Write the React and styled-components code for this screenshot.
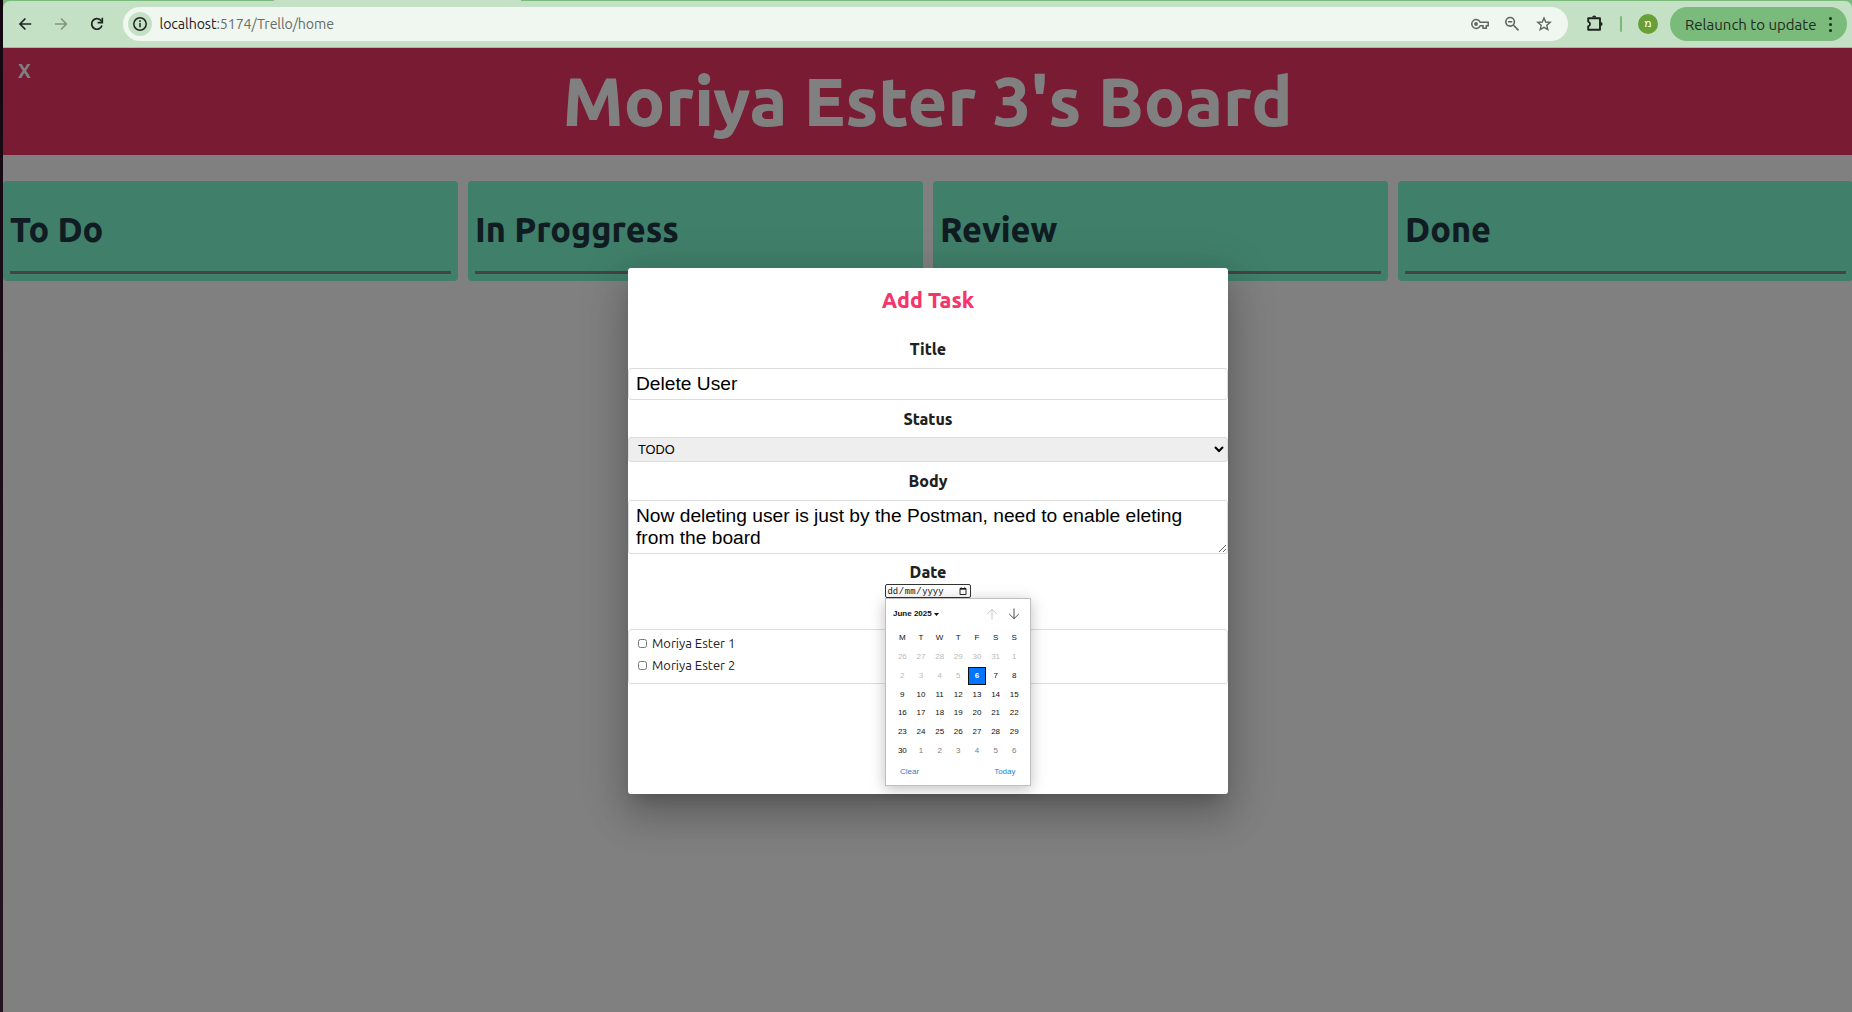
import React from "react";
import styled, { createGlobalStyle } from "styled-components";

const UI = `"Ubuntu", "Noto Sans", sans-serif`;
const ARIAL = `"Liberation Sans", Arial, sans-serif`;

const GlobalStyle = createGlobalStyle`
  *, *::before, *::after { box-sizing: border-box; }
  body { margin: 0; overflow: hidden; background: #808080; font-family: ${UI}; }
`;

/* ---------- window ---------- */

const Screen = styled.div`
  display: flex;
  width: 100vw;
  height: 100vh;
  overflow: hidden;
`;

const DesktopEdge = styled.div`
  flex: 0 0 3px;
  background: linear-gradient(#140810, #251422);
`;

const Window = styled.div`
  flex: 1;
  min-width: 0;
  display: flex;
  flex-direction: column;
`;

/* ---------- browser toolbar ---------- */

const Chrome = styled.div`
  flex: 0 0 48px;
  padding-top: 1px;
  background: linear-gradient(90deg, #7aba7b 271px, #c5e1c5 271px, #c5e1c5 518px, #7aba7b 518px);
`;

const Toolbar = styled.div`
  display: flex;
  align-items: center;
  height: 47px;
  padding-left: 13px;
  background: #c5e1c5;
  border-bottom: 1px solid #9dbf9e;
  border-radius: 7px 7px 0 0;
`;

const NavIcons = styled.div`
  display: flex;
  gap: 18px;
  margin-right: 17px;
  color: #1f2420;
`;

const Icon = styled.svg`
  display: block;
  flex: none;
  width: ${(p) => p.$size || 18}px;
  height: ${(p) => p.$size || 18}px;
  color: ${(p) => p.$color || "inherit"};
  fill: none;
  stroke: currentColor;
  stroke-width: 1.7;
`;

const Omnibox = styled.div`
  display: flex;
  align-items: center;
  width: 1445px;
  height: 34px;
  padding: 0 15px 0 5px;
  border-radius: 17px;
  background: #f0f7f0;
`;

const SiteInfo = styled.div`
  display: grid;
  place-items: center;
  width: 24px;
  height: 24px;
  margin-right: 7.5px;
  border-radius: 50%;
  background: #c5e1c5;
  color: #1f2420;
`;

const Url = styled.div`
  flex: 1;
  font-size: 14.2px;
  font-weight: 450;
  line-height: 20px;
  letter-spacing: -0.09px;
  color: #666c67;
  white-space: nowrap;
`;

const Host = styled.span`
  color: #1d211e;
`;

const OmniActions = styled.div`
  display: flex;
  gap: 14px;
  color: #5f6660;
`;

const Extensions = styled.div`
  margin-left: 17px;
  color: #1f2420;
`;

const Divider = styled.div`
  width: 2px;
  height: 16px;
  margin: 0 16px 0 15px;
  border-radius: 1px;
  background: #7aba7b;
`;

const Avatar = styled.div`
  width: 20px;
  height: 20px;
  border-radius: 50%;
  background: #689f38;
  color: #fff;
  font: 11px/20px "DejaVu Sans", sans-serif;
  text-align: center;
`;

const Relaunch = styled.div`
  display: flex;
  align-items: center;
  justify-content: space-between;
  width: 177px;
  height: 34px;
  margin-left: 12px;
  padding: 0 14px 0 15px;
  border-radius: 17px;
  background: #7aba7b;
  color: #1f2a20;
  font-size: 15px;
  font-weight: 450;
  white-space: nowrap;
`;

const MenuDots = styled.div`
  display: flex;
  flex-direction: column;
  align-items: center;
  gap: 3px;
  width: 6px;
`;

const Dot = styled.i`
  width: 3px;
  height: 3px;
  border-radius: 50%;
  background: #1f2420;
`;

/* ---------- board ---------- */

const Page = styled.main`
  position: relative;
  flex: 1;
  background: #808080;
`;

const Header = styled.header`
  display: grid;
  grid-template-columns: 60px 1fr 60px;
  height: 107px;
  background: #791b33;
  color: #808080;
`;

const CloseBoard = styled.div`
  padding: 12px 0 0 15px;
  font-size: 19.5px;
  font-weight: 700;
  line-height: 22px;
`;

const BoardTitle = styled.h1`
  margin: 0;
  font-size: 68.4px;
  font-weight: 800;
  line-height: 106px;
  text-align: center;
  white-space: nowrap;
`;

const Columns = styled.section`
  display: grid;
  grid-template-columns: repeat(4, 455px);
  gap: 10px;
  padding-top: 26px;
`;

const Column = styled.div`
  height: 100px;
  padding: 0 7px;
  border-radius: 4px;
  background: #407f6a;
`;

const ColumnTitle = styled.h2`
  margin: 0;
  padding-top: 7px;
  border-bottom: 3px solid #444;
  color: #101c22;
  font-size: 34.2px;
  font-weight: 800;
  line-height: 83px;
`;

/* ---------- dialog ---------- */

const Dialog = styled.div`
  position: absolute;
  top: 220px;
  left: 625px;
  display: flex;
  flex-direction: column;
  width: 600px;
  height: 526px;
  border-radius: 3px;
  background: #fff;
  color: #212121;
  box-shadow:
    0 11px 15px -7px rgba(0, 0, 0, 0.2),
    0 24px 38px 3px rgba(0, 0, 0, 0.14),
    0 9px 46px 8px rgba(0, 0, 0, 0.12);
`;

const DialogTitle = styled.h3`
  height: 63px;
  margin: 0;
  color: #f4366c;
  font-size: 21.4px;
  font-weight: 800;
  line-height: 65px;
  text-align: center;
`;

const Label = styled.label`
  display: block;
  height: ${(p) => p.$height || 37}px;
  font-size: 16px;
  font-weight: 800;
  line-height: ${(p) => p.$line || 37}px;
  text-align: center;
`;

const TextInput = styled.input`
  width: 100%;
  height: 32px;
  padding: 0 7px;
  border: 1px solid #ddd;
  border-radius: 3px;
  outline: none;
  background: #fff;
  color: #000;
  font: 19.2px ${ARIAL};
`;

const Select = styled.select`
  width: 100%;
  height: 25px;
  padding: 0 4px 0 5px;
  border: 1px solid #ddd;
  border-radius: 3px;
  background: #eee;
  color: #000;
  font: 12.8px ${ARIAL};
`;

const TextArea = styled.textarea`
  display: block;
  width: 100%;
  height: 54px;
  padding: 4px 7px;
  border: 1px solid #ddd;
  border-radius: 3px;
  outline: none;
  overflow: hidden;
  color: #000;
  font: 19.2px/22px ${ARIAL};
`;

const DateField = styled.div`
  position: relative;
  display: flex;
  align-items: center;
  width: 86px;
  height: 14px;
  margin: 0 0 31px 257px;
  padding: 1px 3px 0 1.5px;
  border: 1px solid #333;
  border-radius: 2px;
  color: #111;
  font: 8.9px/12px "Liberation Mono", monospace;
`;

const DatePart = styled.span`
  margin-right: 0.7px;
`;

const PickerIcon = styled(Icon)`
  margin: -1px 0 0 auto;
`;

const Members = styled.div`
  height: 55px;
  padding: 2px 9px;
  border: 1px solid #ddd;
  border-radius: 3px;
`;

const Member = styled.label`
  display: flex;
  align-items: center;
  height: 22px;
  font-size: 13px;
  font-weight: 440;
`;

const Checkbox = styled.input`
  width: 9px;
  height: 9px;
  margin: 0 5px 0 0;
`;

/* ---------- calendar popup ---------- */

const Calendar = styled.div`
  position: absolute;
  z-index: 2;
  top: 13px;
  left: -1px;
  width: 146px;
  height: 188px;
  border: 1px solid #bfbfbf;
  background: #fff;
  box-shadow: 0 3px 14px rgba(0, 0, 0, 0.25);
  color: #101010;
  font: 8px/10px ${ARIAL};
`;

const MonthBar = styled.div`
  display: flex;
  align-items: center;
  height: 29px;
  padding: 1px 10px 0 7px;
  font-weight: 700;
`;

const Caret = styled.svg`
  display: block;
  width: 5px;
  height: 3px;
  margin: 0 auto 0 2px;
  fill: #101010;
`;

const MonthArrow = styled(Icon)`
  margin-left: 10px;
  stroke-width: 0.95;
`;

const Days = styled.div`
  display: grid;
  grid-template-columns: repeat(7, 18.67px);
  grid-template-rows: 20px repeat(6, 18.67px);
  margin-left: 7px;
`;

const tones = { past: "#b9b9b9", next: "#7d7d7d", day: "#101010", today: "#fff" };

const Day = styled.span`
  display: grid;
  place-items: center;
  color: ${(p) => tones[p.$tone]};
  font-weight: ${(p) => (p.$tone === "today" ? 700 : 400)};
  background: ${(p) => (p.$tone === "today" ? "#0075ff" : "none")};
  border: ${(p) => (p.$tone === "today" ? "1px solid #101010" : "0")};
`;

const CalendarFooter = styled.div`
  display: flex;
  justify-content: space-between;
  padding: 7.5px 14.5px 0 14px;
  color: #1a85d6;
`;

/* ---------- data ---------- */

const columns = ["To Do", "In Proggress", "Review", "Done"];
const members = ["Moriya Ester 1", "Moriya Ester 2"];
const weekdays = ["M", "T", "W", "T", "F", "S", "S"];

/* June 2025 in six weeks, with the ends of May and the start of July */
const TODAY = 6;
const days = Array.from({ length: 42 }, (_, i) => {
  if (i < 6) return { n: 26 + i, tone: "past" };
  const n = i - 5;
  if (n > 30) return { n: n - 30, tone: "next" };
  if (n === TODAY) return { n, tone: "today" };
  return { n, tone: n < TODAY ? "past" : "day" };
});

/* ---------- views ---------- */

function BrowserBar() {
  return (
    <Chrome>
      <Toolbar>
        <NavIcons>
          <Icon viewBox="0 0 18 18"><path d="M15.2 9H4.4M9.4 3.5 4 9 9.4 14.5" /></Icon>
          <Icon viewBox="0 0 18 18" $color="#83957f"><path d="M3 9h11M9 3.5 14.4 9 9 14.5" /></Icon>
          <Icon viewBox="0 0 18 18">
            <path d="M14 10.6A5.3 5.3 0 1 1 13.2 5.7L14.3 7" />
            <path d="M14.3 2.8V7.6H9.6" />
          </Icon>
        </NavIcons>
        <Omnibox>
          <SiteInfo>
            <Icon viewBox="0 0 18 18">
              <circle cx="9" cy="9" r="6.2" strokeWidth="1.5" />
              <path d="M9 8v4.2M9 5.3v1.6" strokeWidth="1.5" />
            </Icon>
          </SiteInfo>
          <Url><Host>localhost</Host>:5174/Trello/home</Url>
          <OmniActions>
            <Icon viewBox="0 0 18 18">
              <path d="M9.2 7.3A4.4 4.4 0 1 0 9.2 10.7H12v2.6h3.3v-2.6H17.2V7.3Z" strokeWidth="1.5" />
              <circle cx="5" cy="9" r="1.9" fill="currentColor" stroke="none" />
            </Icon>
            <Icon viewBox="0 0 18 18">
              <circle cx="7.1" cy="6.8" r="4.3" strokeWidth="1.6" />
              <path d="M10.3 10l5.2 5.4M5 6.8h4.2" strokeWidth="1.6" />
            </Icon>
            <Icon viewBox="0 0 18 18">
              <path d="M9 3l1.7 4 4.5.4-3.4 2.9 1 4.3L9 12.3l-3.8 2.3 1-4.3L2.8 7.4 7.3 7Z" strokeWidth="1.4" />
            </Icon>
          </OmniActions>
        </Omnibox>
        <Extensions>
          <Icon viewBox="0 0 20 20" $size={20}>
            <path d="M3.2 4.2H15v11.6H3.2v-3.4a2.5 2.5 0 0 0 0-4.8Z" strokeWidth="1.9" strokeLinejoin="round" />
            <path d="M7.2 3.6a2 2 0 0 1 4 0ZM15.6 8a2 2 0 0 1 0 4Z" fill="currentColor" stroke="none" />
          </Icon>
        </Extensions>
        <Divider />
        <Avatar>מ</Avatar>
        <Relaunch>
          Relaunch to update
          <MenuDots><Dot /><Dot /><Dot /></MenuDots>
        </Relaunch>
      </Toolbar>
    </Chrome>
  );
}

function DatePicker() {
  return (
    <DateField>
      <DatePart>dd</DatePart><DatePart>/</DatePart>
      <DatePart>mm</DatePart><DatePart>/</DatePart>
      <DatePart>yyyy</DatePart>
      <PickerIcon viewBox="0 0 8 8" $size={8}>
        <path d="M1 1.5h6v6H1zM1 2.2h6M2.3.3v1.2M5.7.3v1.2" strokeWidth="0.9" />
      </PickerIcon>
      <Calendar>
        <MonthBar>
          June 2025
          <Caret viewBox="0 0 5 3"><path d="M0 0h5L2.5 3Z" /></Caret>
          <MonthArrow viewBox="0 0 12 12" $size={12} $color="#c4c4c4"><path d="M6 11.5V1.5M1.2 6 6 1.3 10.8 6" /></MonthArrow>
          <MonthArrow viewBox="0 0 12 12" $size={12} $color="#444"><path d="M6 .5v10M1.2 6 6 10.7 10.8 6" /></MonthArrow>
        </MonthBar>
        <Days>
          {weekdays.map((d, i) => <Day key={"w" + i} $tone="day">{d}</Day>)}
          {days.map((d, i) => <Day key={i} $tone={d.tone}>{d.n}</Day>)}
        </Days>
        <CalendarFooter><span>Clear</span><span>Today</span></CalendarFooter>
      </Calendar>
    </DateField>
  );
}

function AddTask() {
  return (
    <Dialog>
      <DialogTitle>Add Task</DialogTitle>
      <Label>Title</Label>
      <TextInput defaultValue="Delete User" />
      <Label $line={38}>Status</Label>
      <Select defaultValue="TODO"><option>TODO</option></Select>
      <Label $height={38} $line={38}>Body</Label>
      <TextArea
        spellCheck={false}
        defaultValue="Now deleting user is just by the Postman, need to enable eleting from the board"
      />
      <Label $height={30} $line={36}>Date</Label>
      <DatePicker />
      <Members>
        {members.map((m) => (
          <Member key={m}><Checkbox type="checkbox" />{m}</Member>
        ))}
      </Members>
    </Dialog>
  );
}

export default function App() {
  return (
    <Screen>
      <GlobalStyle />
      <DesktopEdge />
      <Window>
        <BrowserBar />
        <Page>
          <Header>
            <CloseBoard>X</CloseBoard>
            <BoardTitle>Moriya Ester 3's Board</BoardTitle>
          </Header>
          <Columns>
            {columns.map((title) => (
              <Column key={title}>
                <ColumnTitle>{title}</ColumnTitle>
              </Column>
            ))}
          </Columns>
          <AddTask />
        </Page>
      </Window>
    </Screen>
  );
}
